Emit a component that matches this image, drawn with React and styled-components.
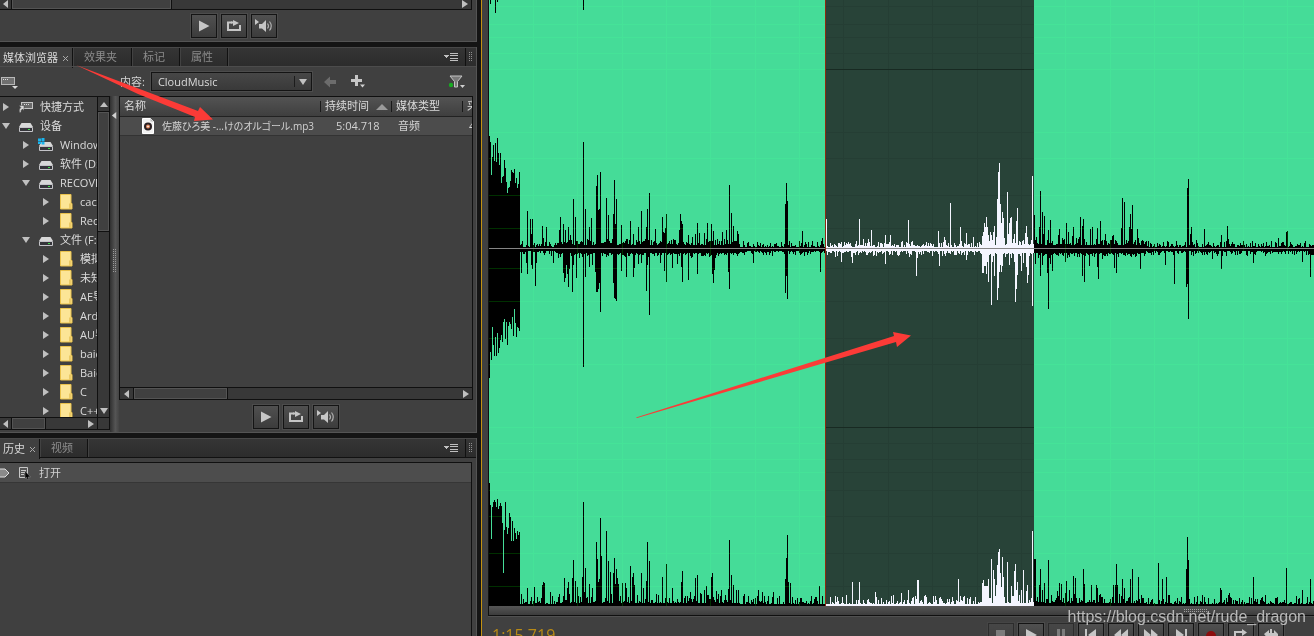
import React, { useMemo, useState } from 'react';
import styled, { createGlobalStyle } from 'styled-components';

const GlobalStyle = createGlobalStyle`
  * {
    box-sizing: border-box;
  }
  body {
    margin: 0;
    background: #141414;
    overflow: hidden;
  }
  button, select {
    font: inherit;
    color: inherit;
    padding: 0;
    margin: 0;
    border: 0;
    background: none;
  }
`;

//  //  //  //  //  //  //  //
// LAYOUT STYLED COMPONENTS //
//  //  //  //  //  //  //  //

const Window = styled.div`
  position: relative;
  display: flex;
  height: 100vh;
  overflow: hidden;
  background: #141414;
  color: #d2d2d2;
  font-family: 'Open Sans', 'Noto Sans CJK SC', sans-serif;
  font-size: 11px;
  line-height: 18px;
`;

const SideColumn = styled.aside`
  flex: 0 0 477px;
  display: flex;
  flex-direction: column;
  gap: 5px;
  min-width: 0;
`;

const Panel = styled.section`
  display: flex;
  flex-direction: column;
  flex: ${(props) => (props.$fill ? '1' : 'none')};
  min-height: 0;
  background: #404040;
  border-right: 1px solid #545454;
  border-bottom: ${(props) => (props.$fill ? '0' : '1px solid #545454')};
`;

const TabBar = styled.div`
  display: flex;
  height: 19px;
  background: linear-gradient(#353535, #2c2c2c);
  border-top: 1px solid #484848;
`;

const Tab = styled.button`
  height: ${(props) => (props.$active ? '20px' : '18px')};
  padding: ${(props) => (props.$active ? '0 3px' : '0 14px 0 11px')};
  display: flex;
  align-items: center;
  gap: 4px;
  white-space: nowrap;
  color: ${(props) => (props.$active ? '#dadada' : '#8c8c8c')};
  background: ${(props) => (props.$active ? '#404040' : 'none')};
  border-right: 1px solid #111;
  box-shadow: ${(props) => (props.$active ? 'none' : 'inset 1px 0 #424242, 0 1px #111')};
`;

const TabSpace = styled.div`
  flex: 1;
  display: flex;
  align-items: center;
  justify-content: flex-end;
  padding-right: 6px;
  box-shadow: inset 1px 0 #424242, 0 1px #111;
`;

const Grip = styled.span`
  width: ${(props) => props.$w || '11px'};
  display: grid;
  place-items: center;
  border-left: 1px solid #111;
  box-shadow: 0 1px #111;
`;

const IconButton = styled.button`
  display: grid;
  place-items: center;
  flex: none;
  width: ${(props) => props.$w || '16px'};
  height: 18px;
`;

const PreviewBar = styled.div`
  display: flex;
  justify-content: center;
  gap: 4px;
  padding: ${(props) => props.$pad || '5px 0'};
`;

const BoxButton = styled.button`
  display: grid;
  place-items: center;
  flex: none;
  width: 26px;
  height: 24px;
  border: 1px solid #141414;
  outline: 1px solid #4c4c4c;
  background: linear-gradient(#505050, #3c3c3c);
  opacity: ${(props) => (props.disabled ? '0.45' : '1')};
`;

const Scrollbar = styled.div`
  display: flex;
  flex: none;
  flex-direction: ${(props) => (props.$vertical ? 'column' : 'row')};
  width: ${(props) => (props.$vertical ? '12px' : 'auto')};
  height: ${(props) => (props.$vertical ? 'auto' : '12px')};
  background: #383838;
  border: 0 solid #101010;
  border-width: ${(props) => (props.$vertical ? '0 0 0 1px' : '1px 0 0')};
`;

const ScrollArrow = styled.button`
  flex: none;
  display: grid;
  place-items: center;
  width: ${(props) => props.$w || '12px'};
  height: ${(props) => props.$h || '11px'};
`;

const Thumb = styled.div`
  flex: none;
  width: ${(props) => props.$w || '11px'};
  height: ${(props) => props.$h || '11px'};
  background: #404040;
  border: 1px solid #545454;
  outline: 1px solid #101010;
`;

const Track = styled.div`
  flex: 1;
`;

//  //  //  //  //  //  //  //  //
// MEDIA BROWSER COMPONENTS     //
//  //  //  //  //  //  //  //  //

const TopList = styled.div`
  height: 10px;
  margin-right: 4px;
  display: flex;
  flex-direction: column;
  justify-content: flex-end;
  overflow: hidden;
  border: solid #101010;
  border-width: 0 1px 1px 0;
`;

const Toolbar = styled.div`
  display: flex;
  align-items: center;
  height: 30px;
  border-top: 1px solid #4c4c4c;
`;

const DriveMenu = styled.div`
  flex: 0 0 120px;
  padding-top: 3px;
`;

const ContentSelect = styled.select`
  appearance: none;
  width: 161px;
  height: 19px;
  margin-left: 6px;
  padding-left: 6px;
  color: #dadada;
  border: 1px solid #141414;
  outline: 1px solid #4c4c4c;
  background:
    linear-gradient(#1c1c1c, #1c1c1c) 142px 3px / 1px 11px no-repeat,
    linear-gradient(#474747, #393939);
`;

const SelectWrap = styled.span`
  display: grid;
  align-items: center;
  > * {
    grid-area: 1 / 1;
  }
  > svg {
    justify-self: end;
    margin-right: 5px;
    pointer-events: none;
  }
`;

const ToolIcons = styled.div`
  flex: 1;
  display: flex;
  align-items: center;
  gap: 12px;
  padding: 0 10px;
  > :last-child {
    margin-left: auto;
  }
`;

const Browser = styled.div`
  display: flex;
  height: 336px;
`;

const TreeBox = styled.div`
  flex: 0 0 110px;
  min-width: 0;
  height: 334px;
  display: flex;
  flex-direction: column;
  border: solid #101010;
  border-width: 1px 1px 1px 0;
`;

const TreeBody = styled.div`
  display: flex;
  flex: 1;
  min-height: 0;
`;

const Tree = styled.ul`
  flex: 1;
  min-width: 0;
  margin: 0;
  padding: 0;
  list-style: none;
  overflow: hidden;
  color: #dadada;
`;

const TreeRow = styled.li`
  display: flex;
  align-items: center;
  height: 19px;
  padding-left: ${(props) => props.$level * 20}px;
  white-space: nowrap;
`;

const Twisty = styled.button`
  flex: none;
  width: 12px;
  height: 18px;
  display: grid;
  place-items: center;
`;

const TreeIcon = styled.span`
  flex: none;
  display: grid;
  place-items: center;
  width: 28px;
`;

const Divider = styled.div`
  flex: 0 0 9px;
  display: flex;
  flex-direction: column;
  align-items: center;
  padding-top: 16px;
  background: linear-gradient(90deg, #303030, #555 60%, #444);
`;

const DividerDots = styled.span`
  margin-top: 130px;
  line-height: 0;
`;

const ContentPane = styled.div`
  flex: 1;
  min-width: 0;
  margin-right: 3px;
`;

const FileBox = styled.div`
  height: 304px;
  display: flex;
  flex-direction: column;
  border: 1px solid #101010;
  overflow: hidden;
`;

const FileScroll = styled.div`
  flex: 1;
  overflow: hidden;
`;

const FileTable = styled.table`
  width: 420px;
  table-layout: fixed;
  border-collapse: collapse;
  white-space: nowrap;
`;

const HeadCell = styled.th`
  width: ${(props) => props.$w};
  height: 19px;
  padding: 0 0 0 4px;
  text-align: left;
  font-weight: 400;
  color: #dadada;
  background:
    linear-gradient(#191919, #191919) 100% 50% / 1px 11px no-repeat,
    linear-gradient(#535353, #3f3f3f);
  border-bottom: 1px solid #222;
  > svg {
    margin-left: 7px;
  }
`;

const Cell = styled.td`
  height: 19px;
  padding: 0 0 0 ${(props) => props.$pad || '6px'};
  background: #4c4c4c;
  border-bottom: 1px solid #333;
`;

const FileName = styled.span`
  display: flex;
  align-items: center;
  gap: 8px;
  font-family: 'Open Sans', 'Noto Sans CJK JP', sans-serif;
  font-size: 10px;
  font-feature-settings: 'palt';
  > svg {
    flex: none;
  }
`;

//  //  //  //  //  //  //  //  //
// HISTORY + EDITOR COMPONENTS  //
//  //  //  //  //  //  //  //  //

const HistoryList = styled.ul`
  flex: 1;
  margin: 5px 4px 0 0;
  padding: 0;
  list-style: none;
  border: solid #101010;
  border-width: 1px 1px 0 0;
`;

const HistoryRow = styled.li`
  display: flex;
  align-items: center;
  height: 20px;
  background: #4d4d4d;
  border-bottom: 1px solid #363636;
  > svg {
    margin-right: 8px;
  }
`;

const Editor = styled.main`
  flex: 1;
  min-width: 0;
  margin-left: 4px;
  display: flex;
  flex-direction: column;
  padding-left: 6px;
  background: #404040;
  border-left: 1px solid #c39212;
`;

const WaveFrame = styled.div`
  flex: 1;
  min-height: 0;
  border-left: 1px solid #101010;
  background: #000;
  > svg {
    display: block;
  }
`;

const RangeBar = styled.div`
  height: 10px;
  flex: none;
  display: flex;
  justify-content: flex-end;
  padding: 3px 106px 0 0;
  background: linear-gradient(#565656, #3c3c3c);
  border: solid #101010;
  border-width: 0 0 1px 1px;
  box-shadow: 0 1px #505050;
`;

const Transport = styled.footer`
  height: 20px;
  flex: none;
  display: flex;
  align-items: flex-start;
  justify-content: space-between;
  overflow: hidden;
  padding: 7px 30px 0 4px;
`;

const TimeCode = styled.output`
  color: #b98a15;
  font-size: 16px;
  line-height: 24px;
`;

const TransportButtons = styled.div`
  display: flex;
  gap: 4px;
`;

const Watermark = styled.div`
  position: absolute;
  right: 8px;
  bottom: 9px;
  color: rgba(205, 205, 205, 0.85);
  font-family: 'Liberation Sans', sans-serif;
  font-size: 16px;
  line-height: 20px;
`;

const Annotations = styled.svg`
  position: absolute;
  left: 0;
  top: 0;
  pointer-events: none;
`;

//  //  //  //
// ICONS    //
//  //  //  //

const trianglePaths = {
  left: 'M6 0v8L1 4z',
  right: 'M1 0v8l6-4z',
  up: 'M0 6h8L4 1z',
  down: 'M0 1h8L4 7z',
};

function Triangle({ dir, size = 8, color = '#c0c0c0' }) {
  return (
    <svg width={size} height={size} viewBox="0 0 8 8">
      <path d={trianglePaths[dir]} fill={color} />
    </svg>
  );
}

function Dots({ cols, rows, color = '#8e8e8e' }) {
  const cells = [];
  for (let c = 0; c < cols; c += 1) {
    for (let r = 0; r < rows; r += 1) {
      cells.push(<rect key={`${c}-${r}`} x={c * 2} y={r * 2} width="1" height="1" fill={color} />);
    }
  }
  return <svg width={cols * 2} height={rows * 2} shapeRendering="crispEdges">{cells}</svg>;
}

function DriveIcon({ windows, shortcut }) {
  if (shortcut) {
    return (
      <svg width="16" height="14" viewBox="0 0 16 14">
        <rect x="3.5" y="2.5" width="11" height="6" fill="#6a6a6a" stroke="#c4c4c4" />
        <path d="M6 4.500h1M8 4.500h1M10 4.500h1" stroke="#ddd" />
        <path d="M1 5.500h5v5L4.500 9Q2.500 10 3 12.500H1.500Q0.500 9.500 2.800 7.500z" fill="#d8d8d8" stroke="#404040" strokeWidth="0.500" />
      </svg>
    );
  }
  return (
    <svg width="16" height="14" viewBox="0 0 16 14">
      <path d="M3.500 4h9L15 8H1z" fill="#d8d8d8" />
      <rect x="1" y="8" width="14" height="5" rx="1" fill="#c4c4c8" />
      <rect x="2" y="9" width="12" height="3" fill="#35353a" />
      <rect x="10" y="10" width="2" height="1" fill="#3ee04a" />
      {windows && <path d="M0 0.500h3v2.500h-3zM3.500 0h3v3h-3zM0 3.500h3v2.500h-3zM3.500 3.500h3v3h-3z" fill="#18b4ee" />}
    </svg>
  );
}

function FolderIcon() {
  return (
    <svg width="14" height="17" viewBox="0 0 14 17">
      <path d="M1.500 1.500h10.500v9h1v5.500h-11.500z" fill="#fce596" stroke="#eac24c" />
      <path d="M11 15.500v-5" stroke="#dcae32" />
    </svg>
  );
}

function PlayIcon() {
  return <svg width="12" height="12" viewBox="0 0 12 12"><path d="M1 0.500l10.500 5.500L1 11.500z" fill="#c6c6c6" /></svg>;
}

function LoopIcon() {
  return (
    <svg width="16" height="12" viewBox="0 0 16 12">
      <path d="M6 2.500H2v7.500h12V5" fill="none" stroke="#c6c6c6" strokeWidth="2" />
      <path d="M7 0l6 3-6 3z" fill="#c6c6c6" />
      <path d="M5 2.500h4" stroke="#c6c6c6" strokeWidth="2" />
    </svg>
  );
}

function SpeakerIcon() {
  return (
    <svg width="20" height="14" viewBox="0 0 20 14">
      <path d="M1 0l4 3-4 3z" fill="#c6c6c6" />
      <path d="M5 5h3l4-4v12L8 9.500H5z" fill="#c6c6c6" />
      <path d="M13.500 4.500q2 2.500 0 5M15.500 2.500q3.500 4.500 0 9" fill="none" stroke="#b0b0b0" strokeWidth="1.200" />
    </svg>
  );
}

function MenuIcon() {
  return (
    <svg width="15" height="9" viewBox="0 0 15 9" shapeRendering="crispEdges">
      <path d="M0 2h5L2.500 5z" fill="#c0c0c0" />
      <path d="M6 0.500h8M6 2.500h8M6 5.500h8M6 7.500h8" stroke="#c0c0c0" />
    </svg>
  );
}

function DriveMenuIcon() {
  return (
    <svg width="18" height="14" viewBox="0 0 18 14">
      <rect x="1.500" y="1.500" width="13" height="7" fill="#707070" stroke="#b8b8b8" />
      <path d="M3 3.500h1M5 3.500h1M7 3.500h1" stroke="#ddd" />
      <path d="M12 10h6l-3 3z" fill="#d8d8d8" />
    </svg>
  );
}

function MediaFileIcon() {
  return (
    <svg width="12" height="16" viewBox="0 0 12 16">
      <path d="M0.500 0.500h8L11.500 3.500V15.500H0.500z" fill="#f2f2f2" stroke="#fff" />
      <path d="M8.500 0.500v3h3" fill="#bbb" />
      <circle cx="6" cy="8.500" r="4" fill="#2a2022" />
      <circle cx="6" cy="8.500" r="2" fill="#e58a60" />
      <circle cx="6" cy="8.500" r="0.800" fill="#fff" />
    </svg>
  );
}

function FilterIcon() {
  return (
    <svg width="18" height="16" viewBox="0 0 18 16">
      <path d="M2 2h12L9.500 7.500V13h-3V7.500z" fill="#7a7a7a" stroke="#c4c4c4" />
      <circle cx="3" cy="11" r="2.200" fill="#18ab22" />
      <path d="M12 11h5l-2.500 3z" fill="#d0d0d0" />
    </svg>
  );
}

const transportIcons = {
  停止: <path d="M2 1h9v9H2z" />,
  播放: <path d="M2 0l11 6-11 6z" />,
  暂停: <path d="M3 0h3v12H3zM8 0h3v12H8z" />,
  到开头: <path d="M1 0h2v12H1zM12 0v12L4 6z" />,
  快退: <path d="M7 0v12L0 6zM14 0v12L7 6z" />,
  快进: <path d="M0 0v12l7-6zM7 0v12l7-6z" />,
  到结尾: <path d="M11 0h2v12h-2zM2 0v12l8-6z" />,
  录制: <circle cx="7" cy="7" r="5" fill="#8c0d0d" />,
  循环: <path d="M0 2h8V0l5 3.500L8 7V4H2v8H0zM12 7h2v5h-2z" />,
  跳过: <path d="M0 5l5-4v3h1V0h2v4h2V1l5 5-5 5V7H5v4z" />,
};

//  //  //  //  //  //  //
// WAVEFORM             //
//  //  //  //  //  //  //

const LEFT = 489;
const RIGHT = 1314;
const SEL_START = 825;
const SEL_END = 1034;
const MID = 248;
const LOW = 606;

// loud intro, one value for each column
const introTop = [136, 142, 175, 157, 145, 161, 143, 162, 138, 153, 165, 153, 183, 177, 176, 160, 168, 182, 193, 188, 187, 181, 170, 172, 173, 169, 183, 178, 188, 184, 172];
const introBottom = [378, 352, 360, 327, 345, 356, 337, 356, 333, 353, 348, 340, 335, 342, 322, 319, 339, 322, 345, 326, 322, 324, 329, 317, 336, 309, 323, 337, 327, 328, 331];
const introLow = [483, 505, 539, 507, 502, 500, 502, 507, 499, 509, 506, 503, 506, 523, 573, 530, 502, 527, 534, 528, 513, 517, 541, 521, 541, 528, 533, 539, 531, 535, 532];

// peaks as x, y pairs
const peaksTop = [
  527, 211, 530, 219, 531, 234, 532, 219, 542, 226, 543, 238, 546, 227, 559, 230, 560, 217, 563, 224, 565, 230, 568, 227, 570, 235, 573, 199, 575, 217,
  583, 142, 585, 209, 589, 227, 591, 218, 596, 186, 597, 175, 598, 210, 599, 209, 600, 172, 606, 198, 608, 215, 613, 214, 614, 180, 615, 224, 616, 199,
  621, 225, 630, 221, 633, 234, 638, 227, 641, 211, 646, 227, 647, 209, 649, 193, 655, 229, 662, 217, 663, 232, 664, 233, 665, 228, 666, 214,
  679, 230, 680, 214, 681, 221, 682, 224, 688, 235, 692, 237, 695, 234, 697, 223, 699, 233, 704, 233, 707, 223, 711, 224, 713, 231, 722, 232, 726, 230,
  729, 185, 731, 213, 733, 226, 737, 231, 738, 234, 785, 204, 786, 183, 787, 201, 802, 231, 822, 238,
  826, 219, 859, 219, 863, 239, 868, 239, 871, 230, 885, 235, 890, 235, 908, 220, 938, 231, 944, 237, 945, 240, 950, 203, 960, 227, 966, 233, 973, 237,
  982, 236, 983, 232, 984, 223, 985, 227, 986, 217, 987, 227, 988, 235, 990, 232, 991, 235, 993, 232, 994, 226, 996, 237, 997, 199, 998, 172, 999, 163, 1000, 204, 1001, 223, 1002, 212, 1003, 218,
  1004, 238, 1007, 192, 1008, 234, 1009, 223, 1010, 218, 1011, 217, 1014, 234, 1016, 221, 1017, 208, 1020, 242, 1023, 240, 1025, 233, 1026, 226, 1027, 237, 1032, 176,
  1034, 215, 1036, 237, 1039, 227, 1040, 191, 1042, 212, 1043, 234, 1044, 216, 1048, 230, 1050, 220, 1052, 241, 1058, 235, 1059, 229, 1062, 238, 1064, 239, 1066, 223, 1068, 232, 1072, 236, 1073, 227, 1076, 238,
  1079, 237, 1080, 217, 1082, 226, 1083, 219, 1084, 239, 1090, 229, 1092, 227, 1097, 228, 1100, 221, 1105, 234, 1112, 236, 1113, 235, 1121, 228, 1122, 198, 1124, 202, 1126, 240, 1129, 227, 1130, 214, 1131, 229, 1132, 205,
  1137, 229, 1138, 238, 1148, 241, 1187, 188, 1188, 179, 1190, 234, 1191, 227, 1196, 240, 1204, 229, 1221, 235, 1227, 226, 1228, 239, 1252, 241, 1278, 238, 1286, 232, 1287, 231,
];

const peaksBottom = [
  521, 273, 526, 263, 527, 274, 531, 265, 532, 269, 535, 286, 536, 263, 553, 263, 563, 273, 564, 282, 565, 278, 566, 265, 567, 274, 568, 287, 569, 269, 572, 292, 573, 265, 576, 278,
  583, 367, 585, 277, 589, 267, 592, 265, 595, 272, 596, 292, 597, 292, 598, 289, 599, 283, 600, 312, 613, 283, 614, 298, 615, 299, 616, 301, 621, 271, 626, 277, 633, 277, 634, 268,
  638, 264, 641, 263, 646, 291, 647, 265, 649, 315, 660, 263, 664, 271, 666, 282, 672, 268, 677, 264, 681, 267, 682, 282, 688, 280, 697, 274, 712, 274, 713, 283, 714, 270,
  728, 272, 729, 289, 753, 263, 785, 293, 786, 276, 787, 299, 820, 272,
  835, 257, 841, 262, 851, 257, 852, 263, 885, 264, 909, 257, 916, 276, 917, 258, 939, 266, 966, 260, 982, 273, 983, 273, 984, 266, 985, 266, 986, 274, 987, 262, 988, 282, 991, 305, 992, 262, 994, 276,
  997, 300, 998, 288, 999, 272, 1000, 265, 1001, 272, 1002, 266, 1009, 265, 1014, 262, 1015, 302, 1016, 289, 1017, 275, 1021, 271, 1023, 263, 1026, 267, 1027, 283, 1028, 275, 1032, 306,
  1035, 264, 1040, 276, 1042, 265, 1047, 273, 1048, 309, 1050, 264, 1052, 271, 1065, 262, 1082, 276, 1084, 282, 1089, 266, 1097, 267, 1098, 279, 1102, 259, 1114, 268, 1116, 273, 1140, 269,
  1165, 265, 1174, 284, 1186, 287, 1187, 284, 1188, 319, 1212, 259, 1221, 269, 1253, 263, 1302, 262, 1310, 277,
];

const peaksLow = [
  521, 594, 527, 588, 534, 587, 542, 585, 543, 582, 544, 583, 550, 592, 559, 594, 564, 578, 567, 588, 568, 582, 572, 578, 573, 560, 575, 581, 577, 587, 582, 577, 583, 502, 584, 592, 585, 568, 589, 584, 592, 588,
  596, 542, 597, 559, 598, 582, 599, 579, 600, 518, 601, 556, 606, 531, 608, 561, 610, 572, 613, 573, 614, 558, 615, 584, 616, 569, 617, 578, 618, 584, 622, 583, 625, 583, 626, 588, 630, 566, 632, 577, 633, 573, 634, 585,
  641, 573, 643, 588, 646, 581, 647, 542, 649, 561, 662, 577, 666, 564, 672, 588, 681, 582, 682, 571, 690, 592, 695, 578, 697, 575, 700, 593, 704, 590, 706, 586, 711, 577, 712, 573, 716, 591, 721, 590,
  728, 589, 729, 540, 731, 575, 733, 585, 736, 590, 738, 590, 744, 594, 758, 590, 762, 592, 773, 592, 785, 579, 786, 558, 787, 535, 788, 582, 790, 583, 819, 586,
  852, 582, 859, 582, 875, 592, 893, 595, 901, 593, 908, 590, 917, 580, 918, 580, 933, 596, 940, 597, 958, 579, 975, 597, 982, 583, 983, 580, 984, 586, 985, 586, 986, 586, 987, 586, 988, 579, 991, 559, 993, 570, 994, 579,
  996, 585, 997, 565, 998, 552, 999, 549, 1000, 573, 1001, 587, 1002, 557, 1003, 577, 1007, 562, 1011, 586, 1014, 571, 1015, 564, 1016, 590, 1017, 582, 1019, 595, 1021, 590, 1023, 570, 1026, 591, 1027, 585, 1032, 531,
  1034, 559, 1035, 559, 1039, 585, 1040, 569, 1042, 590, 1044, 583, 1048, 560, 1057, 591, 1059, 583, 1061, 584, 1065, 593, 1066, 581, 1069, 590, 1073, 576, 1075, 578, 1083, 569, 1084, 584, 1091, 585, 1096, 585, 1097, 588, 1099, 595,
  1113, 585, 1115, 585, 1116, 564, 1117, 585, 1122, 579, 1124, 588, 1130, 579, 1132, 569, 1138, 577, 1141, 595, 1158, 563, 1162, 579, 1166, 577, 1168, 595, 1186, 569, 1187, 537, 1188, 560, 1204, 597,
  1220, 588, 1221, 590, 1228, 595, 1229, 593, 1230, 597, 1253, 577, 1286, 568, 1302, 590, 1310, 579,
];

function toMap(pairs) {
  const map = {};
  for (let i = 0; i < pairs.length; i += 2) {
    map[pairs[i]] = pairs[i + 1];
  }
  return map;
}

function buildWave() {
  let seed = 77;
  const rand = () => {
    seed = (seed * 16807) % 2147483647;
    return seed / 2147483647;
  };
  const top = toMap(peaksTop);
  const bottom = toMap(peaksBottom);
  const low = toMap(peaksLow);
  const paths = { quiet: '', selected: '' };

  for (let x = LEFT; x < RIGHT; x += 1) {
    const i = x - LEFT;
    const busy = (x > 555 && x < 740) || (x > 980 && x < 1145) ? 2 : 0;
    const noiseTop = Math.round(1 + busy + rand() ** 2 * 6);
    const noiseBottom = Math.round(3 + busy + rand() ** 2 * 5);
    const noiseLow = Math.round(2 + busy / 2 + rand() ** 3 * 9);
    const y1 = introTop[i] ?? top[x] ?? MID - noiseTop;
    const y2 = introBottom[i] ?? bottom[x] ?? MID + noiseBottom;
    const y3 = introLow[i] ?? low[x] ?? LOW - noiseLow;
    const key = x >= SEL_START && x < SEL_END ? 'selected' : 'quiet';
    paths[key] += `M${x + 0.5} ${y1}V${y2}M${x + 0.5} ${y3}V${LOW}`;
  }
  // tail of the channel scrolled off above
  paths.quiet += 'M490.500 0V4M495.500 0V13M497.500 0V2M583.500 0V10';
  return paths;
}

const gridRows = [6, 24, 37, 53, 69, 132, 158, 195, 228, 268, 301, 338, 364, 427, 443, 459, 472, 490, 516, 553, 586];
const gridCols = Array.from({ length: 18 }, (_, i) => Math.round(533 + i * 44.35));
const gridPath = gridRows.map((y) => `M${LEFT} ${y + 0.5}H${RIGHT}`).join('')
  + gridCols.map((x) => `M${x + 0.5} 0V${LOW}`).join('');

function Waveform() {
  const wave = useMemo(buildWave, []);
  return (
    <svg width="100%" height="100%" viewBox={`${LEFT} 0 ${RIGHT - LEFT} ${LOW}`} preserveAspectRatio="none" shapeRendering="crispEdges">
      <rect x={LEFT} y="0" width={RIGHT - LEFT} height={LOW} fill="#45dc98" />
      <rect x={SEL_START} y="0" width={SEL_END - SEL_START} height={LOW} fill="#284338" />
      <path d={wave.quiet} stroke="#000" />
      <path d={gridPath} stroke="#003000" style={{ mixBlendMode: 'screen' }} clipPath="url(#outside)" />
      <path d={gridPath} stroke="#000" opacity="0.06" clipPath="url(#inside)" />
      <path d={wave.selected} stroke="#f4f5ff" />
      <path d={`M${SEL_START} 69.500H${SEL_END}M${SEL_START} 427.500H${SEL_END}`} stroke="#182a22" />
      <path d={`M${LEFT} 248.500H${RIGHT}`} stroke="#858585" />
      <path d={`M${SEL_START + 0.5} 0V${LOW}`} stroke="#8c2a10" />
      <clipPath id="outside">
        <path d={`M${LEFT} 0H${SEL_START}V${LOW}H${LEFT}zM${SEL_END} 0H${RIGHT}V${LOW}H${SEL_END}z`} />
      </clipPath>
      <clipPath id="inside">
        <rect x={SEL_START} y="0" width={SEL_END - SEL_START} height={LOW} />
      </clipPath>
    </svg>
  );
}

//  //  //  //  //  //  //
// PANELS               //
//  //  //  //  //  //  //

const treeItems = [
  { name: '快捷方式', level: 0, type: 'shortcut' },
  { name: '设备', level: 0, type: 'drive', open: true },
  { name: 'Windows (C:)', level: 1, type: 'windows' },
  { name: '软件 (D:)', level: 1, type: 'drive' },
  { name: 'RECOVERY', level: 1, type: 'drive', open: true },
  { name: 'cache', level: 2, type: 'folder' },
  { name: 'Recovery', level: 2, type: 'folder' },
  { name: '文件 (F:)', level: 1, type: 'drive', open: true },
  { name: '模拟', level: 2, type: 'folder' },
  { name: '未知', level: 2, type: 'folder' },
  { name: 'AE导', level: 2, type: 'folder' },
  { name: 'Arduino', level: 2, type: 'folder' },
  { name: 'AU导', level: 2, type: 'folder' },
  { name: 'baidu', level: 2, type: 'folder' },
  { name: 'Baidu', level: 2, type: 'folder' },
  { name: 'C', level: 2, type: 'folder' },
  { name: 'C++', level: 2, type: 'folder' },
];

function PreviewButtons({ pad }) {
  return (
    <PreviewBar $pad={pad}>
      <BoxButton type="button" aria-label="播放"><PlayIcon /></BoxButton>
      <BoxButton type="button" aria-label="循环"><LoopIcon /></BoxButton>
      <BoxButton type="button" aria-label="自动播放"><SpeakerIcon /></BoxButton>
    </PreviewBar>
  );
}

function Tabs({ names }) {
  const [first, ...others] = names;
  return (
    <TabBar>
      <Tab $active type="button">
        {first}
        <svg width="7" height="7" viewBox="0 0 7 7"><path d="M1 1l5 5M6 1L1 6" stroke="#a8a8a8" /></svg>
      </Tab>
      {others.map((name) => <Tab key={name} type="button">{name}</Tab>)}
      <TabSpace>
        <IconButton type="button" aria-label="面板菜单"><MenuIcon /></IconButton>
      </TabSpace>
      <Grip><Dots cols={2} rows={5} /></Grip>
    </TabBar>
  );
}

function FolderTree() {
  return (
    <TreeBox>
      <TreeBody>
        <Tree>
          {treeItems.map((item) => (
            <TreeRow key={item.name} $level={item.level}>
              <Twisty type="button" aria-label={item.name}><Triangle dir={item.open ? 'down' : 'right'} /></Twisty>
              <TreeIcon>
                {item.type === 'folder'
                  ? <FolderIcon />
                  : <DriveIcon windows={item.type === 'windows'} shortcut={item.type === 'shortcut'} />}
              </TreeIcon>
              {item.name}
            </TreeRow>
          ))}
        </Tree>
        <Scrollbar $vertical>
          <ScrollArrow $w="11px" $h="15px" type="button" aria-label="向上"><Triangle dir="up" /></ScrollArrow>
          <Thumb $h="119px" />
          <Track />
          <ScrollArrow $w="11px" $h="12px" type="button" aria-label="向下"><Triangle dir="down" /></ScrollArrow>
        </Scrollbar>
      </TreeBody>
      <Scrollbar>
        <ScrollArrow type="button" aria-label="向左"><Triangle dir="left" /></ScrollArrow>
        <Thumb $w="33px" />
        <Track />
        <ScrollArrow type="button" aria-label="向右"><Triangle dir="right" /></ScrollArrow>
        <Grip $w="12px" />
      </Scrollbar>
    </TreeBox>
  );
}

function MediaBrowser() {
  const [folder, setFolder] = useState('CloudMusic');
  return (
    <Panel>
      <Tabs names={['媒体浏览器', '效果夹', '标记', '属性']} />
      <Toolbar>
        <DriveMenu>
          <IconButton $w="18px" type="button" aria-label="驱动器"><DriveMenuIcon /></IconButton>
        </DriveMenu>
        <label htmlFor="content">内容:</label>
        <SelectWrap>
          <ContentSelect id="content" value={folder} onChange={(e) => setFolder(e.target.value)}>
            <option>CloudMusic</option>
          </ContentSelect>
          <Triangle dir="down" />
        </SelectWrap>
        <ToolIcons>
          <IconButton type="button" aria-label="后退">
            <svg width="14" height="12" viewBox="0 0 14 12"><path d="M1 6l6-5.500V4h6v4H7v3.500z" fill="#6c6c6c" /></svg>
          </IconButton>
          <IconButton type="button" aria-label="添加">
            <svg width="16" height="15" viewBox="0 0 16 15">
              <path d="M6.500 1v11M1 6.500h11" stroke="#c6c6c6" strokeWidth="3" />
              <path d="M10 10.500h5l-2.500 3z" fill="#d0d0d0" />
            </svg>
          </IconButton>
          <IconButton $w="18px" type="button" aria-label="筛选"><FilterIcon /></IconButton>
        </ToolIcons>
      </Toolbar>
      <Browser>
        <FolderTree />
        <Divider>
          <Triangle dir="left" size={7} color="#d0d0d0" />
          <DividerDots><Dots cols={2} rows={12} color="#999" /></DividerDots>
        </Divider>
        <ContentPane>
          <FileBox>
            <FileScroll>
              <FileTable>
                <thead>
                  <tr>
                    <HeadCell $w="201px">名称</HeadCell>
                    <HeadCell $w="71px">
                      持续时间
                      <svg width="12" height="6" viewBox="0 0 12 6"><path d="M0 6L6 0l6 6z" fill="#9a9a9a" /></svg>
                    </HeadCell>
                    <HeadCell $w="71px">媒体类型</HeadCell>
                    <HeadCell $w="77px">采样率</HeadCell>
                  </tr>
                </thead>
                <tbody>
                  <tr>
                    <Cell $pad="22px">
                      <FileName>
                        <MediaFileIcon />
                        佐藤ひろ美 -...けのオルゴール.mp3
                      </FileName>
                    </Cell>
                    <Cell $pad="15px">5:04.718</Cell>
                    <Cell>音频</Cell>
                    <Cell>44100 Hz</Cell>
                  </tr>
                </tbody>
              </FileTable>
            </FileScroll>
            <Scrollbar>
              <ScrollArrow $w="14px" type="button" aria-label="向左"><Triangle dir="left" /></ScrollArrow>
              <Thumb $w="93px" />
              <Track />
              <ScrollArrow type="button" aria-label="向右"><Triangle dir="right" /></ScrollArrow>
            </Scrollbar>
          </FileBox>
          <PreviewButtons />
        </ContentPane>
      </Browser>
    </Panel>
  );
}

function App() {
  return (
    <>
      <GlobalStyle />
      <Window>
        <SideColumn>
          <Panel>
            <TopList>
              <Scrollbar>
                <ScrollArrow type="button" aria-label="向左"><Triangle dir="left" /></ScrollArrow>
                <Thumb $w="159px" />
                <Track />
                <ScrollArrow type="button" aria-label="向右"><Triangle dir="right" /></ScrollArrow>
              </Scrollbar>
            </TopList>
            <PreviewButtons pad="4px 8px 3px 0" />
          </Panel>
          <MediaBrowser />
          <Panel $fill>
            <Tabs names={['历史', '视频']} />
            <HistoryList>
              <HistoryRow>
                <svg width="10" height="10" viewBox="0 0 10 10"><path d="M-1 1h6l4 4-4 4h-6z" fill="#8a8a8a" stroke="#ddd" /></svg>
                <svg width="13" height="14" viewBox="0 0 13 14">
                  <path d="M1.500 1.500h8v10h-8z" fill="#555" stroke="#c8c8c8" />
                  <path d="M3 4.500h5M3 6.500h5M3 8.500h3" stroke="#c8c8c8" />
                  <path d="M7 5l5.500 6H10l1 2.500-1.500.500-1-2.500L7 12.500z" fill="#000" stroke="#999" strokeWidth="0.500" />
                </svg>
                打开
              </HistoryRow>
            </HistoryList>
          </Panel>
        </SideColumn>
        <Editor>
          <WaveFrame><Waveform /></WaveFrame>
          <RangeBar><Dots cols={12} rows={2} color="#a0a0a0" /></RangeBar>
          <Transport>
            <TimeCode>1:15.719</TimeCode>
            <TransportButtons>
              {Object.keys(transportIcons).map((name) => (
                <BoxButton key={name} type="button" aria-label={name} disabled={name === '停止' || name === '暂停'}>
                  <svg width="14" height="12" viewBox="0 0 14 12" fill="#c6c6c6">{transportIcons[name]}</svg>
                </BoxButton>
              ))}
            </TransportButtons>
          </Transport>
        </Editor>
        <Watermark>https://blog.csdn.net/rude_dragon</Watermark>
        <Annotations width="1314" height="636" viewBox="0 0 1314 636">
          <path d="M76 65L198 111 200 107 213 119.500 194 121 195 117 138 94z" fill="#fb3b37" />
          <path d="M636 417.500L894 336 893 332 911 335.500 897 347 896 342 637 418z" fill="#fb3b37" />
        </Annotations>
      </Window>
    </>
  );
}

export default App;
